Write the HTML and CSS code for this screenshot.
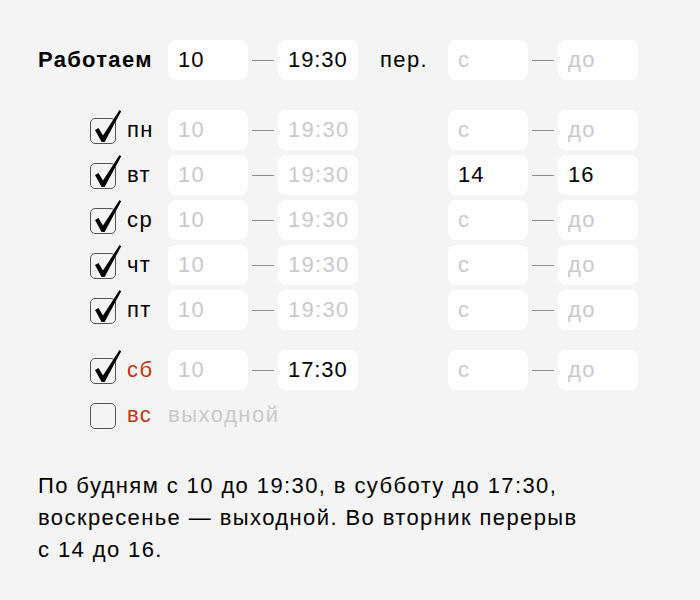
FILE: index.html
```html
<!DOCTYPE html>
<html lang="ru">
<head>
<meta charset="utf-8">
<link rel="stylesheet" href="styles.css">
</head>
<body>
<div class="page">
  <div class="grid head">
    <div class="title">Работаем</div>
    <div class="box">10</div>
    <div class="dash"></div>
    <div class="box">19:30</div>
    <div class="per">пер.</div>
    <div class="box ph">с</div>
    <div class="dash"></div>
    <div class="box ph">до</div>
  </div>

  <div class="days">
    <div class="grid">
      <div class="day"><span class="cb on"><svg viewBox="0 -10 34 36" class="tick"><path d="M5 12 L8.5 10 L13 17.5 L29.5 -8 L31.2 -6.8 L14.6 24 L11.6 24 Z"/></svg></span><span class="dname">пн</span></div>
      <div class="box ph">10</div><div class="dash"></div><div class="box ph">19:30</div><div></div>
      <div class="box ph">с</div><div class="dash"></div><div class="box ph">до</div>
    </div>
    <div class="grid">
      <div class="day"><span class="cb on"><svg viewBox="0 -10 34 36" class="tick"><path d="M5 12 L8.5 10 L13 17.5 L29.5 -8 L31.2 -6.8 L14.6 24 L11.6 24 Z"/></svg></span><span class="dname">вт</span></div>
      <div class="box ph">10</div><div class="dash"></div><div class="box ph">19:30</div><div></div>
      <div class="box">14</div><div class="dash"></div><div class="box">16</div>
    </div>
    <div class="grid">
      <div class="day"><span class="cb on"><svg viewBox="0 -10 34 36" class="tick"><path d="M5 12 L8.5 10 L13 17.5 L29.5 -8 L31.2 -6.8 L14.6 24 L11.6 24 Z"/></svg></span><span class="dname">ср</span></div>
      <div class="box ph">10</div><div class="dash"></div><div class="box ph">19:30</div><div></div>
      <div class="box ph">с</div><div class="dash"></div><div class="box ph">до</div>
    </div>
    <div class="grid">
      <div class="day"><span class="cb on"><svg viewBox="0 -10 34 36" class="tick"><path d="M5 12 L8.5 10 L13 17.5 L29.5 -8 L31.2 -6.8 L14.6 24 L11.6 24 Z"/></svg></span><span class="dname">чт</span></div>
      <div class="box ph">10</div><div class="dash"></div><div class="box ph">19:30</div><div></div>
      <div class="box ph">с</div><div class="dash"></div><div class="box ph">до</div>
    </div>
    <div class="grid">
      <div class="day"><span class="cb on"><svg viewBox="0 -10 34 36" class="tick"><path d="M5 12 L8.5 10 L13 17.5 L29.5 -8 L31.2 -6.8 L14.6 24 L11.6 24 Z"/></svg></span><span class="dname">пт</span></div>
      <div class="box ph">10</div><div class="dash"></div><div class="box ph">19:30</div><div></div>
      <div class="box ph">с</div><div class="dash"></div><div class="box ph">до</div>
    </div>
  </div>

  <div class="weekend">
    <div class="grid">
      <div class="day"><span class="cb on"><svg viewBox="0 -10 34 36" class="tick"><path d="M5 12 L8.5 10 L13 17.5 L29.5 -8 L31.2 -6.8 L14.6 24 L11.6 24 Z"/></svg></span><span class="dname red">сб</span></div>
      <div class="box ph">10</div><div class="dash"></div><div class="box">17:30</div><div></div>
      <div class="box ph">с</div><div class="dash"></div><div class="box ph">до</div>
    </div>
    <div class="grid off">
      <div class="day"><span class="cb"></span><span class="dname red">вс</span></div>
      <div class="offtext">выходной</div>
    </div>
  </div>

  <p class="summary">По будням с 10 до 19:30, в субботу до 17:30,<br>воскресенье — выходной. Во вторник перерыв<br>с 14 до 16.</p>
</div>
</body>
</html>
```

FILE: styles.css
```css
html, body {
  margin: 0;
  padding: 0;
  background: #f4f4f4;
}
body {
  font-family: "Liberation Sans", Arial, sans-serif;
  font-size: 22px;
  letter-spacing: 1.4px;
  color: #000;
}
.page {
  padding: 40px 0 0 38px;
}
.grid {
  display: grid;
  grid-template-columns: 130px 80px 30px 80px 90px 80px 30px 80px;
  height: 40px;
  align-items: center;
}
.title {
  font-weight: bold;
  letter-spacing: 1.3px;
}
.per {
  padding-left: 22px;
}
.box {
  box-sizing: border-box;
  height: 40px;
  line-height: 40px;
  background: #fff;
  border-radius: 8px;
  padding-left: 10px;
  letter-spacing: 0.9px;
  color: #000;
}
.box.ph {
  color: #c9c9c9;
  letter-spacing: 1.3px;
}
.dash {
  height: 1px;
  background: #8c8c8c;
  margin: 1px 4px 0 4px;
}
.days {
  margin-top: 30px;
  display: flex;
  flex-direction: column;
  gap: 5px;
}
.weekend {
  margin-top: 20px;
  display: flex;
  flex-direction: column;
  gap: 5px;
}
.day {
  display: flex;
  align-items: center;
  padding-left: 52px;
  height: 40px;
}
.cb {
  position: relative;
  box-sizing: border-box;
  width: 26px;
  height: 26px;
  border: 1px solid #555;
  border-radius: 5px;
  margin-top: 2px;
  flex: none;
}
.tick {
  position: absolute;
  left: -1px;
  top: -11px;
  width: 34px;
  height: 36px;
  overflow: visible;
}
.tick path {
  fill: #000;
}
.dname {
  margin-left: 11px;
}
.red {
  color: #c0360f;
}
.offtext {
  grid-column: 2 / 6;
  color: #c9c9c9;
  letter-spacing: 1.5px;
}
.summary {
  margin: 35px 0 0 0;
  line-height: 32px;
}
```
